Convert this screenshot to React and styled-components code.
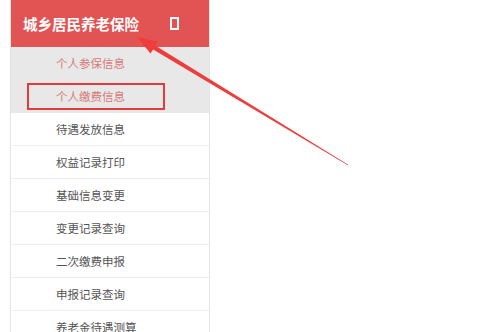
import styled, { createGlobalStyle } from "styled-components";

const GlobalStyle = createGlobalStyle`
  html, body {
    margin: 0;
    padding: 0;
    background: #ffffff;
    overflow: hidden;
  }
  body {
    font-family: "Noto Sans CJK SC", "Liberation Sans", sans-serif;
  }
`;

const Page = styled.div`
  position: relative;
  width: 499px;
  height: 332px;
  padding-left: 10px;
  box-sizing: border-box;
  overflow: hidden;
`;

const Sidebar = styled.div`
  width: 200px;
  display: flex;
  flex-direction: column;
  border-left: 1px solid #e4e4e4;
  border-right: 1px solid #e4e4e4;
  box-sizing: border-box;
`;

const Header = styled.div`
  height: 47px;
  flex-shrink: 0;
  background: #e25454;
  display: flex;
  align-items: center;
  padding-left: 12px;
  gap: 31px;
  color: #ffffff;
  font-weight: bold;
  font-size: 14.5px;
`;

const Tofu = styled.span`
  width: 5px;
  height: 9px;
  border: 2px solid #ffffff;
  margin-top: -1px;
`;

const Item = styled.div`
  height: 33px;
  flex-shrink: 0;
  display: flex;
  align-items: center;
  padding-left: 45px;
  font-size: 11.5px;
  background: ${(p) => (p.$sub ? "#e8e8e8" : "#ffffff")};
  color: ${(p) => (p.$sub ? "#d77a7a" : "#555555")};
  border-bottom: 1px solid ${(p) => (p.$sub ? "#e8e8e8" : "#eeeeee")};
  box-sizing: border-box;
`;

const Label = styled.span`
  position: relative;
`;

const Highlight = styled.span`
  position: absolute;
  left: -29px;
  right: -40px;
  top: -5px;
  bottom: -6px;
  border: 2px solid #e33a3a;
`;

const Overlay = styled.svg`
  position: absolute;
  left: 0;
  top: 0;
  pointer-events: none;
`;

const items = [
  { text: "个人参保信息", sub: true },
  { text: "个人缴费信息", sub: true, marked: true },
  { text: "待遇发放信息" },
  { text: "权益记录打印" },
  { text: "基础信息变更" },
  { text: "变更记录查询" },
  { text: "二次缴费申报" },
  { text: "申报记录查询" },
  { text: "养老金待遇测算" },
];

export default function App() {
  return (
    <>
      <GlobalStyle />
      <Page>
        <Sidebar>
          <Header>
            <span>城乡居民养老保险</span>
            <Tofu />
          </Header>
          {items.map((it) => (
            <Item key={it.text} $sub={it.sub}>
              <Label>
                {it.text}
                {it.marked && <Highlight />}
              </Label>
            </Item>
          ))}
        </Sidebar>
        <Overlay width="499" height="332" viewBox="0 0 499 332">
          <polygon
            points="137,37 158,41.5 155.2,45.4 348.2,164.7 347.8,165.3 153.1,49.5 150.5,53.5"
            fill="#ef3d3d"
          />
        </Overlay>
      </Page>
    </>
  );
}
